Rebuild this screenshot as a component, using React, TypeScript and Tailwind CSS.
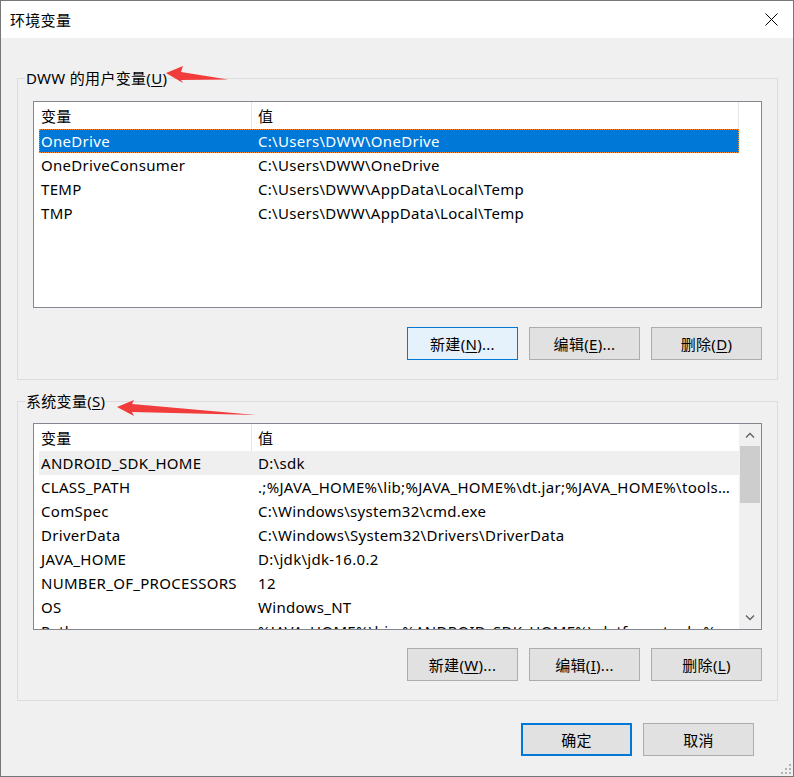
import React from 'react';

const userVars = [
  { name: 'OneDrive', value: 'C:\\Users\\DWW\\OneDrive' },
  { name: 'OneDriveConsumer', value: 'C:\\Users\\DWW\\OneDrive' },
  { name: 'TEMP', value: 'C:\\Users\\DWW\\AppData\\Local\\Temp' },
  { name: 'TMP', value: 'C:\\Users\\DWW\\AppData\\Local\\Temp' },
];

const systemVars = [
  { name: 'ANDROID_SDK_HOME', value: 'D:\\sdk' },
  { name: 'CLASS_PATH', value: '.;%JAVA_HOME%\\lib;%JAVA_HOME%\\dt.jar;%JAVA_HOME%\\tools.jar' },
  { name: 'ComSpec', value: 'C:\\Windows\\system32\\cmd.exe' },
  { name: 'DriverData', value: 'C:\\Windows\\System32\\Drivers\\DriverData' },
  { name: 'JAVA_HOME', value: 'D:\\jdk\\jdk-16.0.2' },
  { name: 'NUMBER_OF_PROCESSORS', value: '12' },
  { name: 'OS', value: 'Windows_NT' },
  { name: 'Path', value: '%JAVA_HOME%\\bin;%ANDROID_SDK_HOME%\\platform-tools;%ANDROID_SDK_HOME%\\tools' },
];

type Row = { name: string; value: string };

// mnemonic label like 新建(N)...
function Label({ text, k, tail = '' }: { text: string; k: string; tail?: string }) {
  return (
    <span>
      {text}(<u className="underline-offset-2">{k}</u>){tail}
    </span>
  );
}

function Btn({ children, kind = 'normal' }: { children: React.ReactNode; kind?: 'normal' | 'hover' | 'default' }) {
  const styles = {
    normal: 'border border-[#adadad] bg-[#e1e1e1]',
    hover: 'border border-[#0078d7] bg-[#e5f1fb]',
    default: 'border-2 border-[#0078d7] bg-[#e1e1e1]',
  };
  return (
    <button className={`w-[111px] h-[33px] flex items-center justify-center text-[15px] leading-[20px] text-black ${styles[kind]}`}>
      {children}
    </button>
  );
}

function Header({ full }: { full: boolean }) {
  return (
    <div className="h-[27px] flex shrink-0 bg-white">
      <div className="w-[218px] pl-[7px] flex items-center border-r border-[#e5e5e5]">变量</div>
      <div className={`w-[487px] pl-[6px] flex items-center ${full ? 'border-r border-[#e5e5e5]' : ''}`}>值</div>
    </div>
  );
}

function Rows({ rows, selected, hovered }: { rows: Row[]; selected?: number; hovered?: number }) {
  return (
    <div className="flex flex-col">
      {rows.map((r, i) => {
        const isSel = i === selected;
        const isHov = i === hovered;
        return (
          <div
            key={r.name}
            className={`ml-[5px] w-[700px] h-[24px] flex items-center shrink-0 ${
              isSel ? 'bg-[#0078d7] text-white outline outline-1 outline-dotted outline-[#ff8728] -outline-offset-1' : isHov ? 'bg-[#efefef]' : ''
            }`}
          >
            <div className="w-[219px] pl-[2px] truncate">{r.name}</div>
            <div className="w-[476px] truncate">{r.value}</div>
          </div>
        );
      })}
    </div>
  );
}

function Chevron({ up }: { up: boolean }) {
  return (
    <svg width="10" height="6" viewBox="0 0 10 6" fill="none" stroke="#606060" strokeWidth="1.3">
      {up ? <polyline points="1,5.5 5,1.5 9,5.5" /> : <polyline points="1,0.5 5,4.5 9,0.5" />}
    </svg>
  );
}

function GroupBox({ label, children, className = '' }: { label: React.ReactNode; children: React.ReactNode; className?: string }) {
  return (
    <fieldset className={`border border-[#dcdcdc] ${className}`}>
      <legend className="ml-[7px] px-[1px] text-[15px] leading-[20px]">{label}</legend>
      {children}
    </fieldset>
  );
}

export default function App() {
  return (
    <div className="relative w-[794px] h-[777px] border border-[#777777] bg-[#f0f0f0] text-[15px] leading-[20px] tracking-[0.3px] text-black font-['Noto_Sans','Noto_Sans_CJK_SC',sans-serif] overflow-hidden">
      {/* title bar */}
      <div className="h-[37px] bg-white flex items-center justify-between pl-[9px] pr-[15px]">
        <span className="text-[15px]">环境变量</span>
        <svg width="13" height="13" viewBox="0 0 13 13" stroke="#000" strokeWidth="1">
          <line x1="0.5" y1="0.5" x2="12.5" y2="12.5" />
          <line x1="12.5" y1="0.5" x2="0.5" y2="12.5" />
        </svg>
      </div>

      <div className="flex flex-col pl-[16px] pr-[15px]">
        <GroupBox className="mt-[30px]" label={<Label text="DWW 的用户变量" k="U" />}>
          <div className="px-[15px] pt-[13px] pb-[19px] flex flex-col">
            <div className="h-[207px] border border-[#828790] bg-white overflow-hidden flex flex-col">
              <Header full />
              <Rows rows={userVars} selected={0} />
            </div>
            <div className="mt-[19px] flex justify-end gap-[11px]">
              <Btn kind="hover"><Label text="新建" k="N" tail="..." /></Btn>
              <Btn><Label text="编辑" k="E" tail="..." /></Btn>
              <Btn><Label text="删除" k="D" /></Btn>
            </div>
          </div>
        </GroupBox>

        <GroupBox className="mt-[11px]" label={<Label text="系统变量" k="S" />}>
          <div className="px-[15px] pt-[12px] pb-[19px] flex flex-col">
            <div className="h-[207px] border border-[#828790] bg-white overflow-hidden flex">
              <div className="w-[705px] flex flex-col overflow-hidden">
                <Header full={false} />
                <Rows rows={systemVars} hovered={0} />
              </div>
              <div className="w-[22px] bg-[#f0f0f0] flex flex-col">
                <div className="h-[22px] flex items-center justify-center"><Chevron up /></div>
                <div className="mx-[1px] h-[57px] bg-[#cdcdcd]" />
                <div className="flex-1" />
                <div className="h-[22px] flex items-center justify-center"><Chevron up={false} /></div>
              </div>
            </div>
            <div className="mt-[18px] flex justify-end gap-[11px]">
              <Btn><Label text="新建" k="W" tail="..." /></Btn>
              <Btn><Label text="编辑" k="I" tail="..." /></Btn>
              <Btn><Label text="删除" k="L" /></Btn>
            </div>
          </div>
        </GroupBox>

        <div className="mt-[22px] pr-[24px] flex justify-end gap-[11px]">
          <Btn kind="default">确定</Btn>
          <Btn>取消</Btn>
        </div>
      </div>

      {/* annotation arrows and resize grip */}
      <svg className="absolute -left-px -top-px pointer-events-none" width="794" height="777" viewBox="0 0 794 777">
        <polygon points="166,73 183,66 181,72 228,79.5 181,80 183,83" fill="#f23c3c" />
        <polygon points="117,407 134,400 132,404 256,415 132,412 134,416" fill="#f23c3c" />
        <g fill="#b4b4b4">
          <rect x="789" y="764" width="2" height="2" />
          <rect x="785" y="768" width="2" height="2" />
          <rect x="789" y="768" width="2" height="2" />
          <rect x="781" y="772" width="2" height="2" />
          <rect x="785" y="772" width="2" height="2" />
          <rect x="789" y="772" width="2" height="2" />
        </g>
      </svg>
    </div>
  );
}
